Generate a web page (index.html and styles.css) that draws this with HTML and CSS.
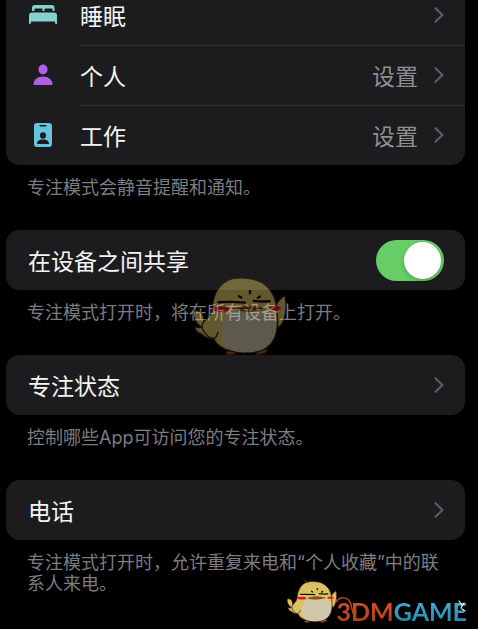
FILE: index.html
```html
<!DOCTYPE html>
<html lang="zh-CN">

<head>
    <meta charset="UTF-8">
    <meta name="viewport" content="width=device-width, initial-scale=1.0">
    <title>专注模式</title>
    <link rel="stylesheet" href="styles.css">
</head>

<body>
    <!-- Shared drawings -->
    <svg class="defs" aria-hidden="true">
        <symbol id="chevron" viewBox="0 0 10 16">
            <path d="M1.5 1.2 L8.5 8 L1.5 14.8" fill="none" stroke="currentColor" stroke-width="2.2" stroke-linecap="round" stroke-linejoin="round" />
        </symbol>
        <symbol id="bird" viewBox="42 20 282 256">
            <g stroke="#3a1c10" stroke-width="4" stroke-linejoin="round" stroke-linecap="round">
                <path d="M140 264 Q142 256 158 256 L172 264 Q162 272 146 270 Z" fill="#b0521c" />
                <path d="M228 264 L246 253 Q264 248 266 258 Q260 268 236 269 Z" fill="#b0521c" />
                <path d="M290 122 Q300 102 318 90 Q326 122 318 154 Q312 178 298 188 Z" fill="#d8c364" />
                <path d="M156 41 Q182 36 206 39 C262 44 292 84 294 134 C302 194 292 236 250 256 Q206 270 156 258 Q118 250 104 222 Q84 222 68 208 Q48 200 46 184 Q58 190 66 186 Q40 166 42 138 Q56 132 66 142 Q76 152 74 170 Q96 152 100 130 C102 86 120 54 156 41 Z" fill="#d8c364" />
                <path d="M72 172 Q64 188 76 202 Q88 220 104 220 Q114 216 116 202" fill="none" />
                <path d="M156 41 Q138 38 134 24 Q142 36 158 39" fill="#b0521c" />
            </g>
            <path d="M144 142 Q204 128 272 140 Q302 168 286 216 Q266 262 204 262 Q150 264 130 232 Q116 190 144 142 Z" fill="#cfc8ac" />
            <ellipse cx="126" cy="132" rx="25" ry="8" fill="#e8162a" />
            <ellipse cx="288" cy="129" rx="18" ry="7" fill="#e8162a" />
            <path d="M158 132 Q208 112 258 130 Q208 150 158 132 Z" fill="#a05a1c" />
            <path d="M160 132 Q208 126 258 131" fill="none" stroke="#5a2a10" stroke-width="3" />
            <g fill="none" stroke="#17100a" stroke-width="7" stroke-linecap="round">
                <path d="M118 111 Q156 109 198 112" />
                <path d="M224 107 Q244 110 272 108" />
                <path d="M213 78 V84" />
                <path d="M180 93 L187 97" />
                <path d="M243 94 L237 98" />
            </g>
        </symbol>
    </svg>

    <main class="page">
        <section class="section first">
            <div class="card">
                <a class="row" href="#sleep">
                    <svg class="icon" viewBox="0 0 30 30" fill="#83d2cd">
                        <path d="M4 11 V8 Q4 5 7 5 H23.500 Q26.500 5 26.500 8 V11 H24.500 V9.500 Q24.500 8.500 23.500 8.500 H17.500 Q16.500 8.500 16.500 9.500 V11 H14.500 V9.500 Q14.500 8.500 13.500 8.500 H7.500 Q6.500 8.500 6.500 9.500 V11 Z" />
                        <path d="M1 23.500 V15.500 Q1 12.500 4 12.500 H26 Q29 12.500 29 15.500 V23.500 Q28.500 24 27.500 24 L26.800 21.500 H3.200 L2.500 24 Q1.500 24 1 23.500 Z" />
                    </svg>
                    <span class="label">睡眠</span>
                    <svg class="chevron"><use href="#chevron" /></svg>
                </a>
                <a class="row" href="#personal">
                    <svg class="icon" viewBox="0 0 30 30" fill="#b05ee8">
                        <ellipse cx="15" cy="9.500" rx="4.600" ry="5" />
                        <path d="M5.500 24 C5.500 20 9.500 16.500 15 16.500 S24.500 20 24.500 24 Q24.500 25 23 25 H7 Q5.500 25 5.500 24 Z" />
                    </svg>
                    <span class="label">个人</span>
                    <span class="value">设置</span>
                    <svg class="chevron"><use href="#chevron" /></svg>
                </a>
                <a class="row" href="#work">
                    <svg class="icon" viewBox="0 0 30 30">
                        <rect x="6" y="3" width="18" height="24" rx="3" fill="#65c3e0" />
                        <g fill="#1c1c1e">
                            <rect x="11.500" y="5" width="7" height="1.600" rx="0.800" />
                            <ellipse cx="15" cy="15.500" rx="3" ry="3.300" />
                            <path d="M9 24 C9 21 11.500 19.600 15 19.600 S21 21 21 24 Z" />
                        </g>
                    </svg>
                    <span class="label">工作</span>
                    <span class="value">设置</span>
                    <svg class="chevron"><use href="#chevron" /></svg>
                </a>
            </div>
            <p class="note">专注模式会静音提醒和通知。</p>
        </section>

        <section class="section">
            <div class="card">
                <div class="row">
                    <label class="label" for="share">在设备之间共享</label>
                    <input class="switch" type="checkbox" role="switch" id="share" checked>
                </div>
            </div>
            <p class="note">专注模式打开时，将在所有设备上打开。</p>
        </section>

        <section class="section">
            <div class="card">
                <a class="row" href="#status">
                    <span class="label">专注状态</span>
                    <svg class="chevron"><use href="#chevron" /></svg>
                </a>
            </div>
            <p class="note">控制哪些App可访问您的专注状态。</p>
        </section>

        <section class="section">
            <div class="card">
                <a class="row" href="#phone">
                    <span class="label">电话</span>
                    <svg class="chevron"><use href="#chevron" /></svg>
                </a>
            </div>
            <p class="note">专注模式打开时，允许重复来电和“个人收藏”中的联系人来电。</p>
        </section>

        <svg class="watermark" aria-hidden="true"><use href="#bird" /></svg>

        <div class="logo">
            <svg class="logo-bird" aria-hidden="true"><use href="#bird" /></svg>
            <span class="logo-text"><span class="logo-red">3DM</span><span class="logo-blue">GAME</span></span>
            <!-- tail over the 3 and the sparkle on the E -->
            <svg class="logo-marks" viewBox="0 0 132 30" aria-hidden="true">
                <path d="M1 8 C5 2 14 2 16 11 C17 18 19 22 21 26" fill="none" stroke="#b8441c" stroke-width="1.500" stroke-linecap="round" />
                <path d="M124 7 L127 11 M129 9 L126 14 M127 15 L130 17" stroke="#e8f8ff" stroke-width="1.200" stroke-linecap="round" />
            </svg>
        </div>
    </main>
</body>

</html>
```
FILE: styles.css
```css
* {
    box-sizing: border-box;
}

body {
    margin: 0;
    background: #000;
    color: #fff;
    font-family: Inter, "Noto Sans CJK SC", sans-serif;
}

.defs {
    display: none;
}

.page {
    position: relative;
    min-height: 100vh;
    padding: 0 13px 0 6px;
    overflow: hidden;
}

.section {
    margin-bottom: 32px;
}

/* the list is scrolled a little under the top edge */
.first {
    margin-top: -15px;
}

.card {
    background: #1c1c1e;
    border-radius: 14px;
}

.row {
    position: relative;
    display: flex;
    align-items: center;
    height: 60px;
    padding: 0 21px 0 22px;
    color: #f4f4f5;
    font-size: 23px;
    line-height: 32px;
    text-decoration: none;
}

.row + .row::before {
    content: "";
    position: absolute;
    top: 0;
    left: 74px;
    right: 0;
    height: 1px;
    background: #303032;
}

.icon {
    width: 30px;
    height: 30px;
    margin-right: 22px;
}

.label,
.value {
    padding-top: 4px;
}

.label {
    flex: 1;
}

.value {
    margin-right: 16px;
    color: #8e8e93;
}

.chevron {
    width: 10px;
    height: 16px;
    color: #5c5c60;
}

.switch {
    appearance: none;
    display: flex;
    justify-content: flex-start;
    width: 68px;
    height: 41px;
    margin: 0;
    padding: 2px 3px;
    border-radius: 21px;
    background: #39393d;
    cursor: pointer;
}

.switch::before {
    content: "";
    width: 37px;
    height: 37px;
    border-radius: 50%;
    background: #fff;
    box-shadow: 0 2px 5px rgba(0, 0, 0, 0.2);
}

.switch:checked {
    justify-content: flex-end;
    background: #67ce67;
}

.note {
    margin: 0;
    padding: 12px 18px 0 21px;
    color: #7c7c80;
    font-size: 18px;
    line-height: 21px;
}

.watermark {
    position: absolute;
    top: 272px;
    left: 193px;
    width: 94px;
    height: 85px;
    opacity: 0.45;
    pointer-events: none;
}

.logo {
    position: absolute;
    right: 11px;
    bottom: 5px;
    display: flex;
    align-items: flex-end;
}

.logo-bird {
    width: 50px;
    height: 46px;
}

.logo-text {
    font-family: Lato, sans-serif;
    font-size: 25px;
    font-weight: bold;
    line-height: 26px;
}

.logo-red,
.logo-blue {
    background: linear-gradient(#d8562a, #b03c14);
    background-clip: text;
    color: transparent;
}

.logo-blue {
    background-image: linear-gradient(#4cb4d4, #1c86ac);
}

.logo-marks {
    position: absolute;
    right: 0;
    bottom: 0;
    width: 132px;
    height: 30px;
}
```
